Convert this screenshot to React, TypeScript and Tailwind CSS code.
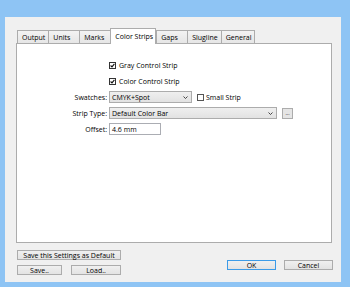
import React from "react";

const tabs = ["Output", "Units", "Marks", "Color Strips", "Gaps", "Slugline", "General"];
const ACTIVE = "Color Strips";

const Check = ({ checked }: { checked?: boolean }) => (
  <span className="w-[7px] h-[7px] border border-[#333] bg-white flex items-center justify-center shrink-0">
    {checked && (
      <svg width="5" height="5" viewBox="0 0 5 5">
        <path d="M0.6 2.5 L2 3.9 L4.4 0.9" fill="none" stroke="#111" strokeWidth="1.1" />
      </svg>
    )}
  </span>
);

const Chevron = () => (
  <svg width="5" height="3" viewBox="0 0 5 3" className="shrink-0">
    <path d="M0.5 0.5 L2.5 2.5 L4.5 0.5" fill="none" stroke="#333" strokeWidth="0.9" />
  </svg>
);

const Btn = ({ label, w, primary }: { label: string; w: string; primary?: boolean }) => (
  <div
    className={`${w} h-[10px] flex items-center justify-center border bg-gradient-to-b from-[#f0f0f0] to-[#e3e3e3] ${
      primary ? "border-[#3c9be8]" : "border-[#acacac]"
    }`}
  >
    {label}
  </div>
);

export default function App() {
  return (
    <div
      className="w-[350px] h-[287px] bg-[#8ec4f4] pt-[17px] pl-[5px] pr-[9px] pb-[5px] flex text-[7px] leading-none text-black"
      style={{ fontFamily: '"Open Sans", "Noto Sans", sans-serif' }}
    >
      <div className="flex-1 bg-[#f0f0f0] flex flex-col pl-[11px] pr-[9px]">
        <div className="h-[26px] flex items-end pl-[1px]">
          {tabs.map((t) =>
            t === ACTIVE ? (
              <div
                key={t}
                className="h-[16px] -mb-px relative z-10 bg-white border border-b-0 border-[#acacac] pl-[4px] pr-[2px] flex items-center"
              >
                {t}
              </div>
            ) : (
              <div
                key={t}
                className="h-[13px] min-w-[31px] border border-b-0 border-r-0 last:border-r border-[#acacac] bg-gradient-to-b from-[#f3f3f3] to-[#e6e6e6] pl-[4px] pr-[3px] flex items-center"
              >
                {t}
              </div>
            )
          )}
        </div>
        <div className="h-[200px] border border-[#acacac] bg-white pt-[13px]">
          <div className="grid grid-cols-[90px_1fr] gap-x-[2px] auto-rows-[16px] items-center">
            <div />
            <div className="flex items-center gap-[3px]">
              <Check checked />
              <span>Gray Control Strip</span>
            </div>
            <div />
            <div className="flex items-center gap-[3px]">
              <Check checked />
              <span>Color Control Strip</span>
            </div>
            <div className="text-right">Swatches:</div>
            <div className="flex items-center gap-[5px]">
              <div className="w-[83px] h-[12px] border border-[#acacac] bg-gradient-to-b from-[#efefef] to-[#e2e2e2] flex items-center justify-between pl-[2px] pr-[3px]">
                <span>CMYK+Spot</span>
                <Chevron />
              </div>
              <div className="flex items-center gap-[2px]">
                <span className="w-[7px] h-[7px] border border-[#555] bg-white" />
                <span>Small Strip</span>
              </div>
            </div>
            <div className="text-right">Strip Type:</div>
            <div className="flex items-center gap-[5px]">
              <div className="w-[168px] h-[12px] border border-[#acacac] bg-gradient-to-b from-[#efefef] to-[#e2e2e2] flex items-center justify-between pl-[2px] pr-[3px]">
                <span>Default Color Bar</span>
                <Chevron />
              </div>
              <div className="w-[11px] h-[11px] border border-[#acacac] bg-[#e5e5e5] flex items-center justify-center text-[5px]">
                ...
              </div>
            </div>
            <div className="text-right">Offset:</div>
            <div>
              <div className="w-[52px] h-[12px] border border-[#abadb3] bg-white flex items-center pl-[2px]">
                4.6 mm
              </div>
            </div>
          </div>
        </div>
        <div className="flex justify-between items-start pt-[7px] pl-[1px] pr-0">
          <div className="flex flex-col gap-[5px]">
            <Btn label="Save this Settings as Default" w="w-[104px]" />
            <div className="flex justify-between">
              <Btn label="Save.." w="w-[45px]" />
              <Btn label="Load.." w="w-[50px]" />
            </div>
          </div>
          <div className="flex gap-[8px] pt-[10px] -mr-[1px]">
            <Btn label="OK" w="w-[49px]" primary />
            <Btn label="Cancel" w="w-[49px]" />
          </div>
        </div>
      </div>
    </div>
  );
}
